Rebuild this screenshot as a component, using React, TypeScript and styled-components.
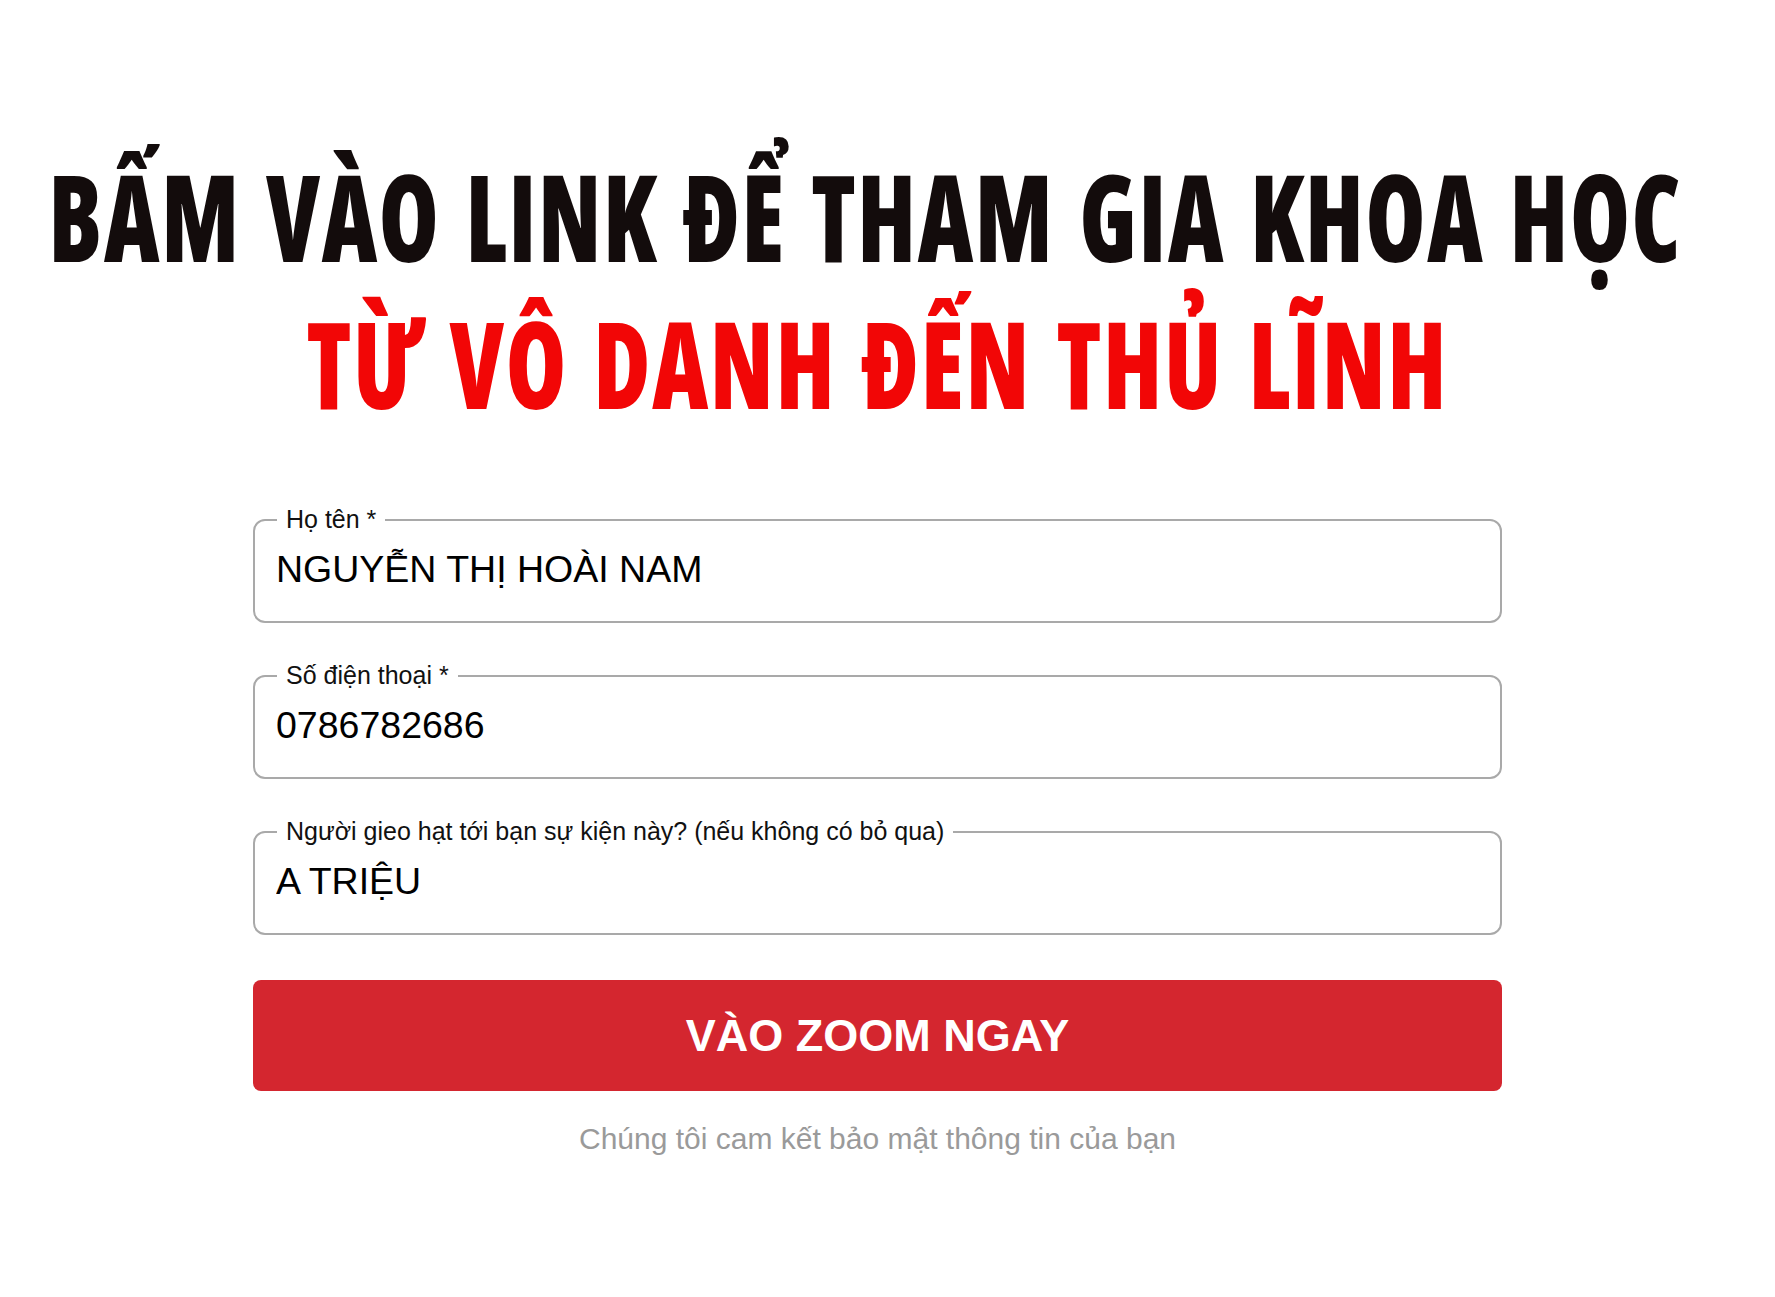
import { useLayoutEffect, useRef, useState } from "react";
import styled, { createGlobalStyle } from "styled-components";

// glyphs are laid out at 88px and stretched up to a 120px cap height
const HEAD_SCALE_Y = 120 / 88;

type FieldDef = { id: string; label: string; value: string };

const initialFields: FieldDef[] = [
  { id: "name", label: "Họ tên *", value: "NGUYỄN THỊ HOÀI NAM" },
  { id: "phone", label: "Số điện thoại *", value: "0786782686" },
  {
    id: "ref",
    label: "Người gieo hạt tới bạn sự kiện này? (nếu không có bỏ qua)",
    value: "A TRIỆU",
  },
];

type FitLineProps = {
  text: string;
  width: number;
  tone: "dark" | "red";
  shift?: number;
};

// stretches a heading line to the width it has in the design
function FitLine({ text, width, tone, shift }: FitLineProps) {
  const ref = useRef<HTMLSpanElement>(null);
  const [scaleX, setScaleX] = useState(1);

  useLayoutEffect(() => {
    const w = ref.current?.offsetWidth;
    if (w) setScaleX(width / w);
  }, [width, text]);

  return (
    <HeadLine tone={tone} shift={shift}>
      <HeadText
        ref={ref}
        style={{ transform: `scale(${scaleX}, ${HEAD_SCALE_Y})` }}
      >
        {text}
      </HeadText>
    </HeadLine>
  );
}

export default function App() {
  const [fields, setFields] = useState(initialFields);

  const update = (id: string, value: string) => {
    setFields((prev) => prev.map((f) => (f.id === id ? { ...f, value } : f)));
  };

  return (
    <Page>
      <GlobalStyle />
      <Heading>
        <FitLine
          tone="dark"
          shift={24}
          width={1634}
          text="BẤM VÀO LINK ĐỂ THAM GIA KHOA HỌC"
        />
        <FitLine tone="red" width={1142} text="TỪ VÔ DANH ĐẾN THỦ LĨNH" />
      </Heading>

      <Form onSubmit={(e) => e.preventDefault()}>
        {fields.map((f) => (
          <Field key={f.id}>
            <Legend>{f.label}</Legend>
            <Input
              value={f.value}
              onChange={(e) => update(f.id, e.target.value)}
            />
          </Field>
        ))}
        <SubmitButton type="submit">VÀO ZOOM NGAY</SubmitButton>
        <Note>Chúng tôi cam kết bảo mật thông tin của bạn</Note>
      </Form>
    </Page>
  );
}

const GlobalStyle = createGlobalStyle`
  html, body {
    margin: 0;
    padding: 0;
    background: #ffffff;
  }
  body {
    font-family: "Liberation Sans", Arial, sans-serif;
  }
`;

const Page = styled.div`
  padding: 142px 20px 0 0;
`;

const Heading = styled.h1`
  margin: 0;
  font-family: "Open Sans", "DejaVu Sans Condensed", sans-serif;
  font-weight: 800;
  font-stretch: 75%;
  font-size: 88px;
  letter-spacing: 1.5px;
  word-spacing: 6px;
`;

const HeadLine = styled.div<{ tone: "dark" | "red"; shift?: number }>`
  display: flex;
  justify-content: center;
  align-items: center;
  height: 147px;
  white-space: nowrap;
  padding-right: ${({ shift }) => shift ?? 0}px;
  color: ${({ tone }) => (tone === "dark" ? "#130c0c" : "#f20606")};
`;

const HeadText = styled.span`
  display: block;
  height: 108px;
  line-height: 108px;
  transform-origin: center;
`;

const Form = styled.form`
  width: 1249px;
  margin: 69px auto 0;
  display: flex;
  flex-direction: column;
  gap: 38px;
`;

const Field = styled.fieldset`
  margin: 0;
  padding: 0;
  min-width: 0;
  border: 2px solid #a9a9a9;
  border-radius: 12px;
`;

const Legend = styled.legend`
  margin-left: 22px;
  padding: 0 9px;
  font-size: 25px;
  line-height: 29px;
  color: #111111;
`;

const Input = styled.input`
  display: block;
  width: 100%;
  box-sizing: border-box;
  height: 71px;
  margin: 0 0 16px;
  padding: 0 21px;
  border: 0;
  outline: none;
  background: transparent;
  font-family: "Liberation Sans", Arial, sans-serif;
  font-size: 37.5px;
  color: #000000;
`;

const SubmitButton = styled.button`
  margin-top: 7px;
  height: 111px;
  border: 0;
  border-radius: 8px;
  background: #d4262f;
  color: #ffffff;
  font-family: "Liberation Sans", Arial, sans-serif;
  font-weight: 700;
  font-size: 45px;
  cursor: pointer;
`;

const Note = styled.p`
  margin: -7px 0 0;
  text-align: center;
  font-size: 30px;
  line-height: 34px;
  color: #9a9a9a;
`;
